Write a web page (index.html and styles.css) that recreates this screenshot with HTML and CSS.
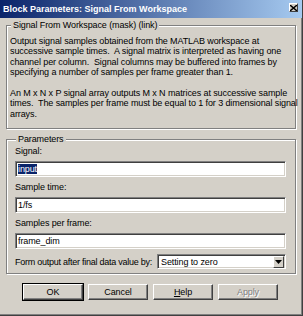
FILE: index.html
```html
<!DOCTYPE html>
<html lang="en">
<head>
    <meta charset="UTF-8">
    <title>Block Parameters: Signal From Workspace</title>
    <link rel="stylesheet" href="styles.css">
</head>
<body>
<div class="window">
    <div class="titlebar">
        <span class="title">Block Parameters: Signal From Workspace</span>
        <span class="close">
            <svg width="7" height="6" viewBox="0 0 7 6"><path d="M0 0 L7 6 M7 0 L0 6" stroke="#000" stroke-width="1.4"/></svg>
        </span>
    </div>
    <div class="content">
        <fieldset class="group desc">
            <legend>Signal From Workspace (mask) (link)</legend>
            <p>Output signal samples obtained from the MATLAB workspace at<br>
                successive sample times.&nbsp; A signal matrix is interpreted as having one<br>
                channel per column.&nbsp; Signal columns may be buffered into frames by<br>
                specifying a number of samples per frame greater than 1.</p>
            <p>An M x N x P signal array outputs M x N matrices at successive sample<br>
                times.&nbsp; The samples per frame must be equal to 1 for 3 dimensional signal<br>
                arrays.</p>
        </fieldset>

        <fieldset class="group params">
            <legend>Parameters</legend>
            <div class="label">Signal:</div>
            <div class="field"><span class="selected">input</span></div>
            <div class="label">Sample time:</div>
            <div class="field">1/fs</div>
            <div class="label">Samples per frame:</div>
            <div class="field">frame_dim</div>
            <div class="row">
                <span class="row-label">Form output after final data value by:</span>
                <div class="field select">
                    <span>Setting to zero</span>
                    <span class="drop">
                        <svg width="7" height="4" viewBox="0 0 7 4"><path d="M0 0 H7 L3.5 4 Z" fill="#000"/></svg>
                    </span>
                </div>
            </div>
        </fieldset>

        <div class="buttons">
            <div class="btn default">OK</div>
            <div class="btn">Cancel</div>
            <div class="btn"><u>H</u>elp</div>
            <div class="btn disabled">Apply</div>
        </div>
    </div>
</div>
</body>
</html>
```

FILE: styles.css
```css
body {
    margin: 0;
    font-family: "Liberation Sans", Arial, sans-serif;
    font-size: 9px;
    letter-spacing: -0.1px;
    color: #000;
    background-color: #d4d0c8;
}

.window {
    width: 303px;
    height: 316px;
    box-sizing: border-box;
    background-color: #d4d0c8;
    border-right: 1px solid #404040;
    border-bottom: 1px solid #404040;
    box-shadow: inset -1px -1px #808080;
    display: flex;
    flex-direction: column;
}

.titlebar {
    height: 18px;
    display: flex;
    align-items: center;
    justify-content: space-between;
    padding: 0 4px 0 3px;
    background: linear-gradient(to right, #0a246a, #a6caf0);
    color: #fff;
    font-weight: bold;
    font-size: 9px;
    letter-spacing: 0;
}

.close {
    width: 9px;
    height: 9px;
    box-sizing: border-box;
    background-color: #d4d0c8;
    border: 1px solid;
    border-color: #fff #404040 #404040 #fff;
    display: flex;
    align-items: center;
    justify-content: center;
    margin-top: -3px;
}

.content {
    padding: 1px 6px 0 6px;
}

.group {
    margin: 0;
    min-width: 0;
    border: 1px solid #808080;
    box-shadow: inset 1px 1px #fff, 1px 1px #fff;
}

.group legend {
    padding: 0 2px;
    margin-left: 1px;
    line-height: 12px;
    background-color: #d4d0c8;
}

.desc {
    padding: 5px 3px 9px 3px;
}

.desc p {
    margin: 0;
    line-height: 10.4px;
    white-space: nowrap;
}

.desc p + p {
    margin-top: 10.4px;
}

.params {
    margin-top: 4px;
    padding: 1px 9px 4px 8px;
}

.label {
    line-height: 11px;
    margin-bottom: 4px;
}

.field {
    height: 16px;
    box-sizing: border-box;
    background-color: #fff;
    border: 1px solid;
    border-color: #808080 #fff #fff #808080;
    box-shadow: inset 1px 1px #404040, inset -1px -1px #d4d0c8;
    padding: 0 2px;
    line-height: 14px;
    margin-bottom: 5px;
}

.selected {
    background-color: #0a246a;
    color: #fff;
}

.row {
    display: flex;
    align-items: center;
    justify-content: space-between;
    margin-top: 2px;
}

.row-label {
    white-space: nowrap;
    letter-spacing: -0.25px;
}

.select {
    flex-shrink: 0;
    width: 129px;
    height: 15px;
    margin: 0;
    display: flex;
    align-items: center;
    justify-content: space-between;
    padding: 0 1px 0 3px;
}

.drop {
    width: 11px;
    height: 12px;
    box-sizing: border-box;
    background-color: #d4d0c8;
    border: 1px solid;
    border-color: #fff #404040 #404040 #fff;
    display: flex;
    align-items: center;
    justify-content: center;
}

.buttons {
    display: flex;
    gap: 5px;
    margin-top: 10px;
    padding-left: 17px;
}

.btn {
    width: 60px;
    height: 16px;
    box-sizing: border-box;
    border: 1px solid;
    border-color: #fff #404040 #404040 #fff;
    box-shadow: inset -1px -1px #808080;
    text-align: center;
    line-height: 14px;
}

.btn.default {
    outline: 1px solid #000;
}

.btn.disabled {
    color: #808080;
    text-shadow: 1px 1px #fff;
}
```
